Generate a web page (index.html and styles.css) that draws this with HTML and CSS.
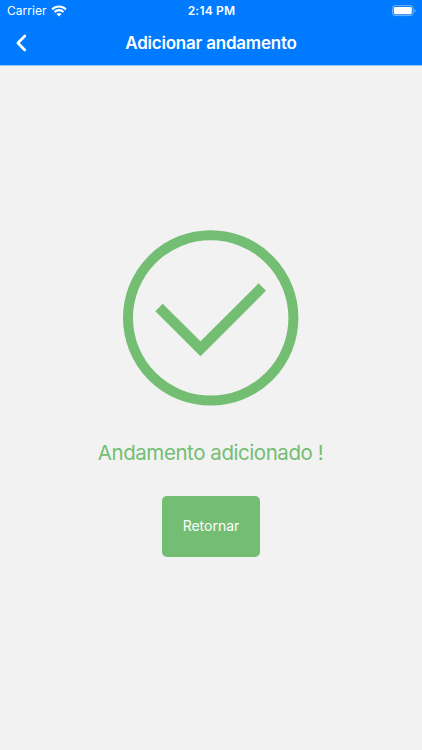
FILE: index.html
```html
<!DOCTYPE html>
<html lang="pt-BR">
<head>
    <meta charset="UTF-8">
    <meta name="viewport" content="width=device-width, initial-scale=1.0">
    <title>Adicionar andamento</title>
    <link rel="stylesheet" href="styles.css">
</head>
<body>

    <header class="header">
        <div class="status">
            <div class="carrier">
                <span>Carrier</span>
                <svg class="wifi" viewBox="0 0 16 12" width="16" height="12">
                    <path d="M1.1 4.4a9.8 9.8 0 0 1 13.8 0M3.5 7a6.4 6.4 0 0 1 9 0" fill="none" stroke="#fff" stroke-width="2.1"/>
                    <path d="M8 11.6L5.5 9.1a3.6 3.6 0 0 1 5 0z" fill="#fff"/>
                </svg>
            </div>
            <div class="time">2:14 PM</div>
            <div class="battery">
                <svg viewBox="0 0 24 12" width="24" height="12">
                    <rect x="0.4" y="0.6" width="20.8" height="10" rx="2.8" fill="none" stroke="#fff" stroke-opacity="0.45"/>
                    <rect x="1.8" y="2" width="18" height="7.2" rx="1.4" fill="#fff"/>
                    <path d="M22.5 4v3.4a1.8 1.8 0 0 0 0-3.4z" fill="#fff" fill-opacity="0.5"/>
                </svg>
            </div>
        </div>
        <nav class="navbar">
            <a class="back" href="#" aria-label="Voltar">
                <svg viewBox="0 0 12 18" width="12" height="18">
                    <path d="M9.8 2L2.9 9l6.9 7" fill="none" stroke="#fff" stroke-width="2.7" stroke-linecap="round" stroke-linejoin="round"/>
                </svg>
            </a>
            <h1 class="title">Adicionar andamento</h1>
        </nav>
    </header>

    <main class="content">
        <svg class="check" viewBox="0 0 176 176" width="176" height="176">
            <circle cx="87.7" cy="87.9" r="82.7" fill="none" stroke="#73be73" stroke-width="10"/>
            <path d="M36 77.5L77.5 118.8l61.8-61.8" fill="none" stroke="#73be73" stroke-width="10.4"/>
        </svg>
        <p class="message">Andamento adicionado !</p>
        <button class="return">Retornar</button>
    </main>

</body>
</html>
```
FILE: styles.css
```css
body {
    margin: 0;
    height: 750px;
    background-color: #f2f2f2;
    font-family: Inter, "Liberation Sans", sans-serif;
}
.header {
    height: 65px;
    border-bottom: 1px solid #8fc3fa;
    background-color: #007aff;
    color: #fff;
}
.status {
    display: grid;
    grid-template-columns: 1fr auto 1fr;
    align-items: center;
    height: 21px;
    padding: 0 6px 0 7px;
    font-size: 12px;
}
.carrier {
    display: flex;
    align-items: center;
    gap: 4px;
    letter-spacing: 0.05px;
}
.time {
    font-weight: 600;
    letter-spacing: 0.2px;
}
.battery {
    display: flex;
    justify-content: flex-end;
}
.navbar {
    display: grid;
    grid-template-columns: 32px 1fr 32px;
    align-items: center;
    height: 43px;
    padding: 0 15px;
}
.back {
    display: flex;
}
.title {
    margin: 0;
    text-align: center;
    font-size: 17px;
    font-weight: 600;
    letter-spacing: -0.22px;
}
.content {
    display: flex;
    flex-direction: column;
    align-items: center;
    padding-top: 164px;
}
.check {
    display: block;
}
.message {
    margin: 34px 0 30px;
    padding-right: 1px;
    font-size: 20.5px;
    line-height: 26px;
    color: #73be73;
    letter-spacing: -0.44px;
}
.return {
    width: 98px;
    height: 61px;
    padding: 0 0 2px;
    border: 0;
    border-radius: 5px;
    background-color: #73be73;
    color: #fff;
    font-family: inherit;
    font-size: 14px;
}
```
